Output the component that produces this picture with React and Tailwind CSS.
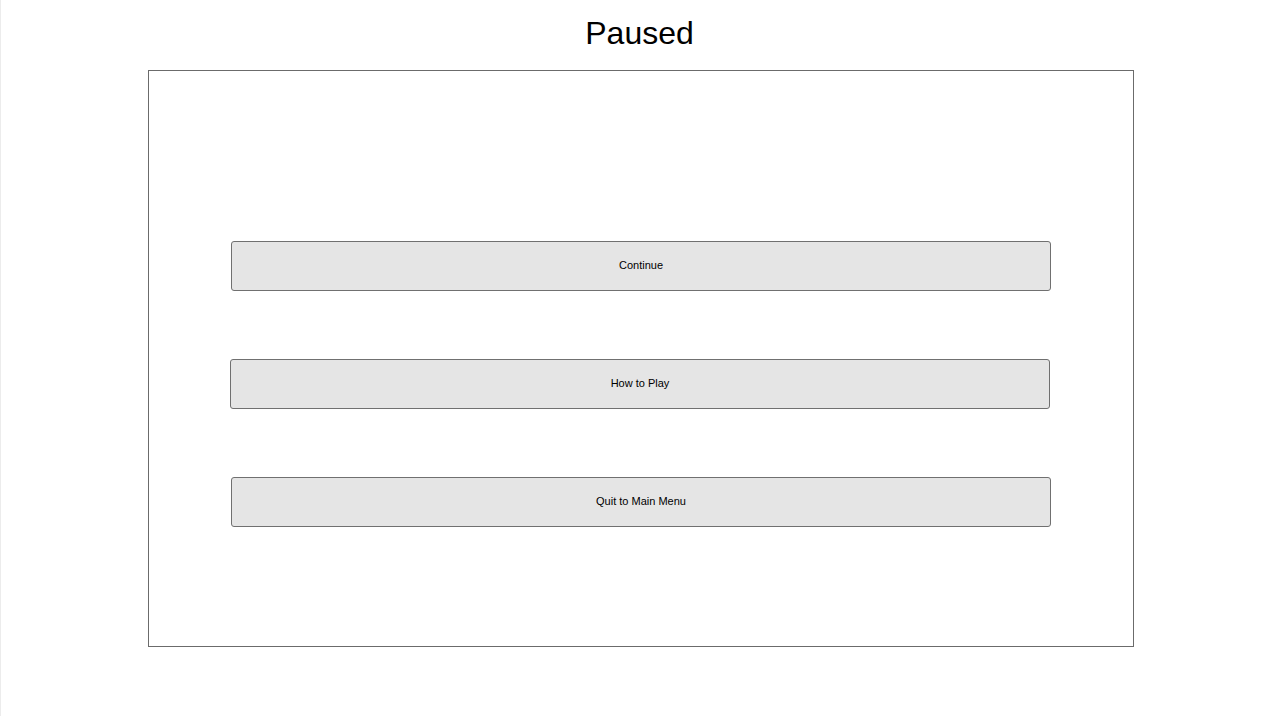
const buttons = [
  { label: "Continue", shift: "" },
  { label: "How to Play", shift: "-translate-x-px" },
  { label: "Quit to Main Menu", shift: "" },
];

const MenuButton = ({ label, shift }) => (
  <button
    className={`h-[50px] w-[820px] rounded-[3px] border border-[#707070] bg-[#e5e5e5] pb-[2px] text-[11px] text-black ${shift}`}
  >
    {label}
  </button>
);

export default function App() {
  return (
    <div
      className="min-h-[716px] w-[1278px] border-l border-[#ececec] bg-white"
      style={{ fontFamily: '"Liberation Sans", Arial, sans-serif' }}
    >
      {/* Title */}
      <h1 className="pt-[15px] text-center text-[32px] leading-[37px] text-black">
        Paused
      </h1>

      {/* Pause panel */}
      <div className="ml-[147px] mt-[18px] flex h-[577px] w-[986px] flex-col items-center gap-[68px] border border-[#6b6b6b] pt-[170px]">
        {buttons.map((b) => (
          <MenuButton key={b.label} {...b} />
        ))}
      </div>
    </div>
  );
}
